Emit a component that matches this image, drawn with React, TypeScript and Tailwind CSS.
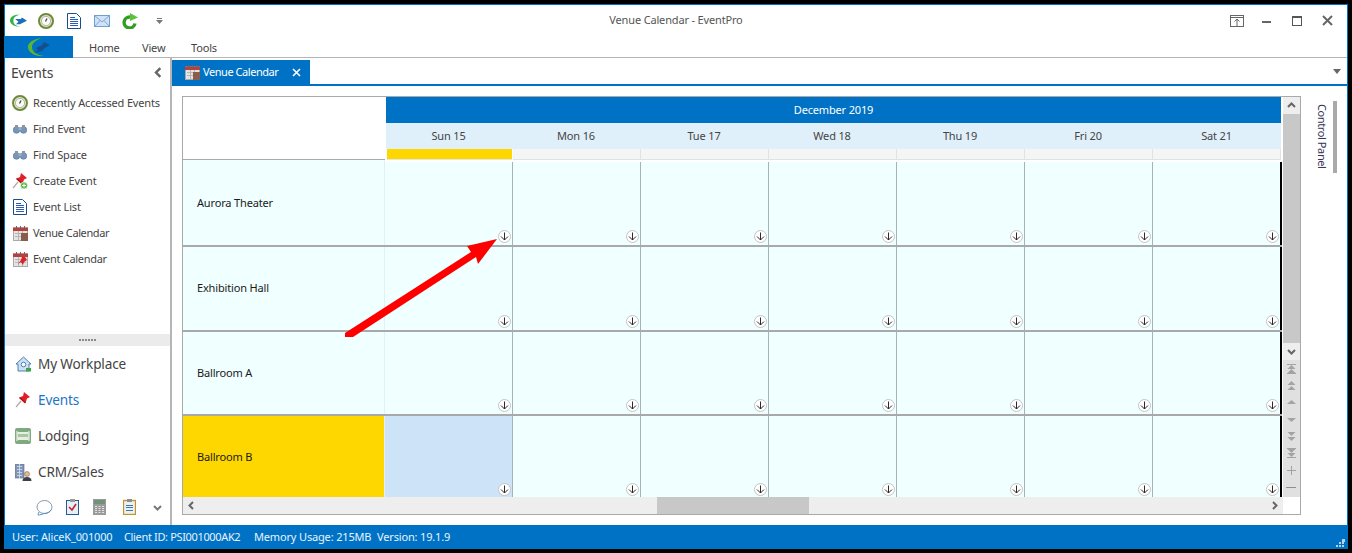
import React from "react";

const Logo = ({ s = 17 }: { s?: number }) => (
  <svg width={s} height={s * 0.8} viewBox="0 0 20 16">
    <path d="M12 1C5 0 0 3 0 8c0 4 5 7 12 7-5-1-8-3-8-7s3-6 8-7z" fill="#35b34a" />
    <path d="M6 6h7l1-2 6 4-6 3-2 1H7l3-3-4-3z" fill="#1d6fb8" />
  </svg>
);
const LogoBig = () => (
  <svg width="24" height="19" viewBox="0 0 24 19">
    <path d="M15 0C6 1 0 5 1 10c1 5 8 9 16 8-7-1-12-4-12-9 0-4 4-7 10-9z" fill="#5cb531" />
    <path d="M9 10l6-3 2-3 6 3-5 3-3 3-8 2 4-3-2-2z" fill="#14508f" />
  </svg>
);
const Clock = () => (
  <svg width="16" height="16" viewBox="0 0 16 16">
    <circle cx="8" cy="8" r="7" fill="#e4e8d2" stroke="#6d8a3b" strokeWidth="2" />
    <circle cx="8" cy="8" r="4.6" fill="#fafaf5" stroke="#8a8f78" strokeWidth=".6" />
    <path d="M9 5.500 7.500 8.500" stroke="#444" strokeWidth="1.2" />
  </svg>
);
const Doc = () => (
  <svg width="14" height="16" viewBox="0 0 14 16">
    <path d="M.5 .5h9l4 4v11H.5z" fill="#fff" stroke="#174f8c" />
    <path d="M3 4.500h5M3 6.500h8M3 8.500h8M3 10.500h8M3 12.500h8" stroke="#1f5fbf" />
    <path d="M3 4.500h1M3 8.500h1M3 12.500h1" stroke="#d23b2e" />
  </svg>
);
const Mail = () => (
  <svg width="16" height="12" viewBox="0 0 16 12">
    <rect x=".5" y=".5" width="15" height="11" fill="#cfe2f6" stroke="#6f9fd2" />
    <path d="M.5 .5 8 7l7.500-6.500M.5 11.500 6 5.500M15.500 11.500 10 5.500" fill="none" stroke="#7aa7d8" />
  </svg>
);
const Refresh = () => (
  <svg width="17" height="16" viewBox="0 0 17 16">
    <path d="M13 10.500A5.500 5.500 0 1 1 8 4" fill="none" stroke="#2f9e22" strokeWidth="3.400" />
    <path d="M8 0l8 4.500L8 8z" fill="#5cc23a" />
  </svg>
);
const Binoculars = () => (
  <svg width="14" height="10" viewBox="0 0 14 10">
    <circle cx="3.500" cy="6" r="3.300" fill="#7397c0" stroke="#5f7288" strokeWidth=".6" />
    <circle cx="10.500" cy="6" r="3.300" fill="#7397c0" stroke="#5f7288" strokeWidth=".6" />
    <rect x="2" y="1" width="3" height="3" fill="#8b96a5" />
    <rect x="9" y="1" width="3" height="3" fill="#8b96a5" />
    <rect x="5.500" y="3" width="3" height="3" fill="#a3acb8" />
  </svg>
);
const Pin = ({ plus = false }: { plus?: boolean }) => (
  <svg width="16" height="16" viewBox="0 0 16 16">
    <path d="M1 15 6 9" stroke="#b5a9a0" strokeWidth="1.200" />
    <path d="M9 0l6 5-3 1.500L10.500 11 4.500 5.500 8 4z" fill="#e21f26" />
    <path d="M4.500 5.500l6 5.500" stroke="#a81318" strokeWidth="1.500" />
    {plus && <circle cx="12" cy="12.500" r="3.500" fill="#58b947" stroke="#fff" strokeWidth=".6" />}
    {plus && <path d="M10 12.500h4M12 10.500v4" stroke="#fff" />}
  </svg>
);
const Cal = ({ pin = false }: { pin?: boolean }) => (
  <svg width="15" height="15" viewBox="0 0 15 15">
    <rect x=".5" y="2" width="14" height="12.500" fill="#e4e4e4" stroke="#a9a9a9" />
    <rect x="0" y="1.500" width="15" height="3.500" fill="#b9403a" />
    <path d="M3.500 0v3M7.500 0v3M11.500 0v3" stroke="#666" />
    <path d="M2 7.500h11M2 10.500h11M5.500 5v9M9.500 5v9" stroke="#b5b5b5" />
    {!pin && <rect x="8" y="7" width="7" height="8" fill="#8a5c4a" />}
    {pin && <path d="M12 5l2 3-3 2-1 3-2-3-3 2 3-4 1-3z" fill="#dd1f2a" />}
  </svg>
);
const House = () => (
  <svg width="17" height="16" viewBox="0 0 17 16">
    <path d="M8.500 1 1 8h2v7h11V8h2z" fill="#cfe0f2" stroke="#4d7fb4" />
    <circle cx="8.500" cy="8.500" r="2.300" fill="#fff" stroke="#4d7fb4" />
    <rect x="11" y="12" width="5" height="3.500" fill="#3fa34d" />
  </svg>
);
const Bed = () => (
  <svg width="16" height="16" viewBox="0 0 16 16">
    <rect width="16" height="16" rx="2" fill="#7fa97f" />
    <rect x="2.500" y="4" width="11" height="8" fill="#e6efe0" />
    <rect x="2.500" y="6" width="11" height="3" fill="#a9c6a4" />
    <path d="M2 3v10M14 3v10" stroke="#fff" />
  </svg>
);
const Crm = () => (
  <svg width="17" height="17" viewBox="0 0 17 17">
    <rect x="0" y="0" width="9" height="14" fill="#8095b8" stroke="#606a7c" strokeWidth=".6" />
    <path d="M2 2.500h5M2 5.500h5M2 8.500h5M2 11.500h5M4.500 0v14" stroke="#c8d3e4" />
    <circle cx="12" cy="10" r="2.500" fill="#e5b98f" stroke="#6a5240" strokeWidth=".5" />
    <path d="M7.500 17c0-3 2-4 4.500-4s4.500 1 4.500 4z" fill="#3b3f46" />
  </svg>
);
const Bubble = () => (
  <svg width="17" height="17" viewBox="0 0 17 17">
    <ellipse cx="8.500" cy="8" rx="7.500" ry="6.500" fill="#fff" stroke="#8d99a6" />
    <path d="M3 13c-1 2-1 3-1 3 2 0 4-.5 6-1.500" fill="none" stroke="#4a90c9" />
    <path d="M8 14.500c3 .2 6-1.500 7.300-4" fill="none" stroke="#4a90c9" />
  </svg>
);
const Clip = () => (
  <svg width="13" height="16" viewBox="0 0 13 16">
    <rect x=".5" y="1.500" width="12" height="14" fill="#e8eef5" stroke="#29588f" />
    <rect x="4" y="0" width="5" height="3" fill="#999" />
    <path d="m3 8 3 3 4-6" fill="none" stroke="#c2242e" strokeWidth="1.600" />
  </svg>
);
const Calc = () => (
  <svg width="13" height="16" viewBox="0 0 13 16">
    <rect width="13" height="16" fill="#9a9a9a" />
    <rect x="1" y="1" width="11" height="4" fill="#6f9279" />
    <path d="M2 7.500h2M5.500 7.500h2M9 7.500h2M2 9.500h2M5.500 9.500h2M9 9.500h2M2 11.500h2M5.500 11.500h2M9 11.500h2M2 13.500h2M5.500 13.500h2M9 13.500h2" stroke="#e3e3e3" />
  </svg>
);
const YClip = () => (
  <svg width="13" height="16" viewBox="0 0 13 16">
    <rect x=".5" y="1.500" width="12" height="14" fill="#e9f1f7" stroke="#c6941c" strokeWidth="1.300" />
    <rect x="4" y="0" width="5" height="3" fill="#8e8e8e" />
    <path d="M3 6.500h7M3 8.500h7M3 11.500h7" stroke="#3e76ad" />
  </svg>
);
const Chev = ({ d, c = "#666", w = 9 }: { d: "up" | "down" | "left" | "right"; c?: string; w?: number }) => {
  const p = { up: "M1 6 4.500 2.500 8 6", down: "M1 3 4.500 6.500 8 3", left: "M6 1 2.500 4.500 6 8", right: "M3 1 6.500 4.500 3 8" }[d];
  return (
    <svg width={w} height={w} viewBox="0 0 9 9">
      <path d={p} fill="none" stroke={c} strokeWidth="2" />
    </svg>
  );
};
const Down = () => (
  <svg width="13" height="13" viewBox="0 0 13 13">
    <circle cx="6.500" cy="6.500" r="6" fill="#fff" stroke="#c4c4c4" />
    <path d="M6.500 2.500v7.500M3 6.500l3.500 3.500L10 6.500" fill="none" stroke="#2a2a2a" />
  </svg>
);
const ScrollGlyph = ({ k }: { k: string }) => {
  const col = "#a3a3a3";
  const g: Record<string, React.ReactNode> = {
    first: <><rect x="1" y="1" width="9" height="1" fill={col} /><path d="M5.500 2 9.500 6h-8zM5.500 6 9.500 10h-8z" fill={col} /><rect x="1" y="10" width="9" height="1" fill={col} /></>,
    pgup: <path d="M5.500 1 9.500 5h-8zM5.500 6 9.500 10h-8z" fill={col} />,
    up: <path d="M5.500 3 10 7H1z" fill={col} />,
    dn: <path d="M5.500 8 10 4H1z" fill={col} />,
    pgdn: <path d="M5.500 5 9.500 1h-8zM5.500 10 9.500 6h-8z" fill={col} />,
    last: <><rect x="1" y="0" width="9" height="1" fill={col} /><path d="M5.500 5 9.500 1h-8zM5.500 9 9.500 5h-8z" fill={col} /><rect x="1" y="9" width="9" height="1" fill={col} /></>,
    plus: <path d="M5.500 1v9M1 5.500h9" stroke={col} />,
    minus: <path d="M0 5.500h10" stroke="#8f8f8f" />,
  };
  return <svg width="11" height="11" viewBox="0 0 11 11">{g[k]}</svg>;
};

const sideItems: [string, React.ReactNode, string][] = [
  ["Recently Accessed Events", <Clock />, ""],
  ["Find Event", <Binoculars />, ""],
  ["Find Space", <Binoculars />, ""],
  ["Create Event", <Pin plus />, ""],
  ["Event List", <Doc />, ""],
  ["Venue Calendar", <Cal />, "tracking-[-0.4px]"],
  ["Event Calendar", <Cal pin />, "tracking-[-0.3px]"],
];
const navItems: [string, React.ReactNode, boolean][] = [
  ["My Workplace", <House />, false],
  ["Events", <Pin />, true],
  ["Lodging", <Bed />, false],
  ["CRM/Sales", <Crm />, false],
];
const days = ["Sun 15", "Mon 16", "Tue 17", "Wed 18", "Thu 19", "Fri 20", "Sat 21"];
const rows = [
  { name: "Aurora Theater", h: "h-[87px]", nudge: "pt-[2px]" },
  { name: "Exhibition Hall", h: "h-[85px]", nudge: "" },
  { name: "Ballroom A", h: "h-[84px]", nudge: "" },
  { name: "Ballroom B", h: "h-[81px]", sel: true, nudge: "pt-[2px]" },
];
const cols = "grid grid-cols-[202px_repeat(6,128px)_129px]";

export default function App() {
  return (
    <div className="relative h-[553px] w-[1352px] overflow-hidden bg-black p-[4px] font-['Noto_Sans',sans-serif] text-[11px] tracking-[-0.16px] text-[#444]">
      <div className="flex h-full flex-col border-l border-r border-t border-[#0072c6] bg-white">
        {/* title bar */}
        <div className="grid h-[31px] shrink-0 grid-cols-[1fr_auto_1fr] items-center">
          <div className="flex items-center">
            {[<Logo />, <Clock />, <Doc />, <Mail />, <Refresh />].map((ic, i) => (
              <div key={i} className={i === 0 ? "flex w-[27px] justify-center" : "flex w-[28px] justify-center"}>{ic}</div>
            ))}
            <svg className="ml-[12px]" width="7" height="7" viewBox="0 0 7 7">
              <path d="M1 1.500h5" stroke="#777" />
              <path d="M0 3h7L3.500 7z" fill="#777" />
            </svg>
          </div>
          <div className="text-[#555]">Venue Calendar - EventPro</div>
          <div className="flex items-center justify-end pr-[14px]">
            <svg width="14" height="12" viewBox="0 0 14 12" className="mr-[18px]">
              <rect x=".5" y=".5" width="13" height="11" fill="none" stroke="#666" />
              <path d="M.5 2.500h13" stroke="#666" />
              <path d="M7 11V4M4.500 6.500 7 4l2.500 2.500" fill="none" stroke="#666" />
            </svg>
            <div className="mr-[21px] mt-[2px] h-[2px] w-[9px] bg-[#666]" />
            <div className="mr-[20px] h-[10px] w-[10px] border border-t-2 border-[#555]" />
            <svg width="11" height="11" viewBox="0 0 11 11">
              <path d="m1 1 9 9M10 1l-9 9" stroke="#666" strokeWidth="2" />
            </svg>
          </div>
        </div>
        {/* ribbon tabs */}
        <div className="flex h-[22px] shrink-0 border-b border-[#b5b5b5]">
          <div className="flex h-[22px] w-[68px] items-center justify-center bg-[#0072c6]">
            <LogoBig />
          </div>
          <div className="ml-[16px] w-[53px] pt-[4px]">Home</div>
          <div className="w-[49px] pt-[4px]">View</div>
          <div className="pt-[4px]">Tools</div>
        </div>
        {/* body */}
        <div className="flex min-h-0 flex-1">
          <aside className="flex w-[167px] shrink-0 flex-col border-r-2 border-[#b5b5b5]">
            <div className="flex h-[32px] shrink-0 items-center justify-between pb-[3px] pl-[6px] pr-[6px]">
              <span className="text-[14px] text-[#444]">Events</span>
              <Chev d="left" w={11} />
            </div>
            <div className="min-h-0 flex-1">
              {sideItems.map(([t, ic, tr]) => (
                <div key={t} className="flex h-[26px] items-center">
                  <div className="flex w-[28px] justify-center pl-[2px]">{ic}</div>
                  <span className={tr}>{t}</span>
                </div>
              ))}
            </div>
            <div className="flex h-[12px] shrink-0 items-center justify-center gap-[1px] bg-[#ebebeb]">
              {[0, 1, 2, 3, 4, 5].map((i) => (
                <div key={i} className="h-[2px] w-[2px] bg-[#8a8a8a]" />
              ))}
            </div>
            {navItems.map(([t, ic, active]) => (
              <div key={t} className="flex h-[36px] shrink-0 items-center">
                <div className="flex w-[33px] justify-center pl-[3px]">{ic}</div>
                <span className={active ? "text-[13.6px] text-[#1a75c8]" : "text-[13.6px] text-[#444]"}>{t}</span>
              </div>
            ))}
            <div className="flex h-[35px] shrink-0 items-center pb-[1px] pl-[31px]">
              <Bubble />
              <div className="ml-[13px]"><Clip /></div>
              <div className="ml-[14px]"><Calc /></div>
              <div className="ml-[17px]"><YClip /></div>
              <div className="ml-[17px]"><Chev d="down" c="#777" /></div>
            </div>
          </aside>
          <main className="flex min-w-0 flex-1 flex-col">
            <div className="flex h-[28px] shrink-0 items-end justify-between border-b-2 border-[#0072c6]">
              <div className="flex h-[24px] w-[138px] items-center bg-[#0072c6] pl-[13px] text-white">
                <Cal />
                <span className="ml-[3px] w-[75px] whitespace-nowrap tracking-[-0.45px]">Venue Calendar</span>
                <svg className="ml-[14px]" width="9" height="9" viewBox="0 0 9 9">
                  <path d="m1 1 7 7M8 1 1 8" stroke="#fff" strokeWidth="1.600" />
                </svg>
              </div>
              <svg className="mb-[10px] mr-[6px]" width="8" height="5" viewBox="0 0 8 5">
                <path d="M0 0h8L4 5z" fill="#666" />
              </svg>
            </div>
            <div className="flex min-h-0 flex-1 pb-[10px] pl-[10px] pt-[10px]">
              <div className="flex w-[1119px] shrink-0 flex-col border border-[#a9a9a9]">
                <div className="flex min-h-0 flex-1">
                  <div className="w-[1099px] shrink-0">
                    <div className={cols}>
                      <div className="row-span-3 h-[63px] border-b border-[#a9a9a9] bg-white" />
                      <div className="col-span-7 ml-[1px] mr-[1px] flex h-[26px] items-center justify-center bg-[#0072c6] text-white">December 2019</div>
                      {days.map((d, i) => (
                        <div key={d} className={i === 0 ? "ml-[1px] flex h-[26px] items-center justify-center bg-[#e0f0fa] pr-[2px]" : i === 6 ? "mr-[1px] flex h-[26px] items-center justify-center bg-[#e0f0fa] pr-[1px]" : "flex h-[26px] items-center justify-center bg-[#e0f0fa] pr-[2px]"}>{d}</div>
                      ))}
                      {days.map((d, i) => (
                        <div
                          key={d}
                          className={
                            i === 0
                              ? "ml-[2px] mr-[1px] h-[11px] border-b border-[#e6e6e6] bg-[#ffd700]"
                              : i === 6
                              ? "mr-[1px] h-[11px] border-b border-r border-[#e2e2e2] bg-[#f5f5f5]"
                              : "h-[11px] border-b border-r border-[#e2e2e2] bg-[#f5f5f5]"
                          }
                        />
                      ))}
                    </div>
                    {rows.map((r, ri) => (
                      <div key={r.name} className={`${cols} ${r.h} ${ri < 3 ? "border-b-2 border-[#a9a9a9]" : ""}`}>
                        <div
                          className={[
                            "flex items-center border-r border-[#e6f0f0] pl-[14px] text-[#1a1a1a]",
                            r.sel ? "bg-[#ffd700]" : "bg-[#f0ffff]",
                            r.nudge,
                          ].join(" ")}
                        >
                          {r.name}
                        </div>
                        {days.map((d, i) => (
                          <div
                            key={d}
                            className={[
                              "flex items-end justify-end pr-[1px]",
                              ri === 0 ? "mt-[2px]" : "",
                              r.sel && i === 0 ? "bg-[#cde3f7]" : "bg-[#f0ffff]",
                              i === 6 ? "border-r-2 border-black" : "border-r border-[#a8b4b4]",
                            ].join(" ")}
                          >
                            <div className={r.sel ? "mb-[1px]" : "mb-[2px]"}><Down /></div>
                          </div>
                        ))}
                      </div>
                    ))}
                  </div>
                  <div className="ml-[1px] flex w-[17px] shrink-0 flex-col bg-[#e0e0e0] pb-[1px]">
                    <div className="flex h-[17px] items-center justify-center bg-[#eeeeee]"><Chev d="up" /></div>
                    <div className="flex-1 bg-[#c8c8c8]" />
                    <div className="flex h-[17px] items-center justify-center bg-[#eeeeee]"><Chev d="down" /></div>
                    {["first", "pgup", "up", "dn", "pgdn", "last", "plus", "minus"].map((k) => (
                      <div key={k} className="flex h-[17px] items-center justify-center"><ScrollGlyph k={k} /></div>
                    ))}
                  </div>
                </div>
                <div className="flex h-[17px] shrink-0">
                  <div className="relative flex w-[1100px] items-center justify-between bg-[#eeeeee] px-[4px]">
                    <Chev d="left" />
                    <div className="absolute left-[474px] top-0 h-[17px] w-[152px] bg-[#c8c8c8]" />
                    <Chev d="right" />
                  </div>
                </div>
              </div>
              <div className="flex flex-1 justify-between pl-[12px] pr-[10px]">
                <div className="mt-[8px] whitespace-nowrap tracking-[-0.4px] text-[#333355] [writing-mode:vertical-rl]">Control Panel</div>
                <div className="mt-[5px] h-[72px] w-[4px] bg-[#aaaaaa]" />
              </div>
            </div>
          </main>
        </div>
        {/* status bar */}
        <div className="relative flex h-[24px] shrink-0 items-center bg-[#0072c6] pl-[7px] text-[#e8f2fa]">
          <span className="w-[112px]">User: AliceK_001000</span>
          <span className="w-[130px] tracking-[-0.35px]">Client ID: PSI001000AK2</span>
          <span className="w-[123px]">Memory Usage: 215MB</span>
          <span>Version: 19.1.9</span>
          <svg className="absolute bottom-[1px] right-[2px]" width="9" height="9" viewBox="0 0 9 9">
            <path d="M6 0h3v3H6zM3 3h2v2H3zM6 3h2v2H6zM0 6h2v2H0zM3 6h2v2H3zM6 6h2v2H6z" fill="#b5d3ea" />
          </svg>
        </div>
      </div>
      {/* annotation arrow */}
      <svg className="pointer-events-none absolute left-0 top-0" width="1352" height="553" viewBox="0 0 1352 553">
        <polygon points="497,239 467,246 471,252 345,333 345,337 353,337 476,257 478,264" fill="#ff0000" />
      </svg>
    </div>
  );
}
